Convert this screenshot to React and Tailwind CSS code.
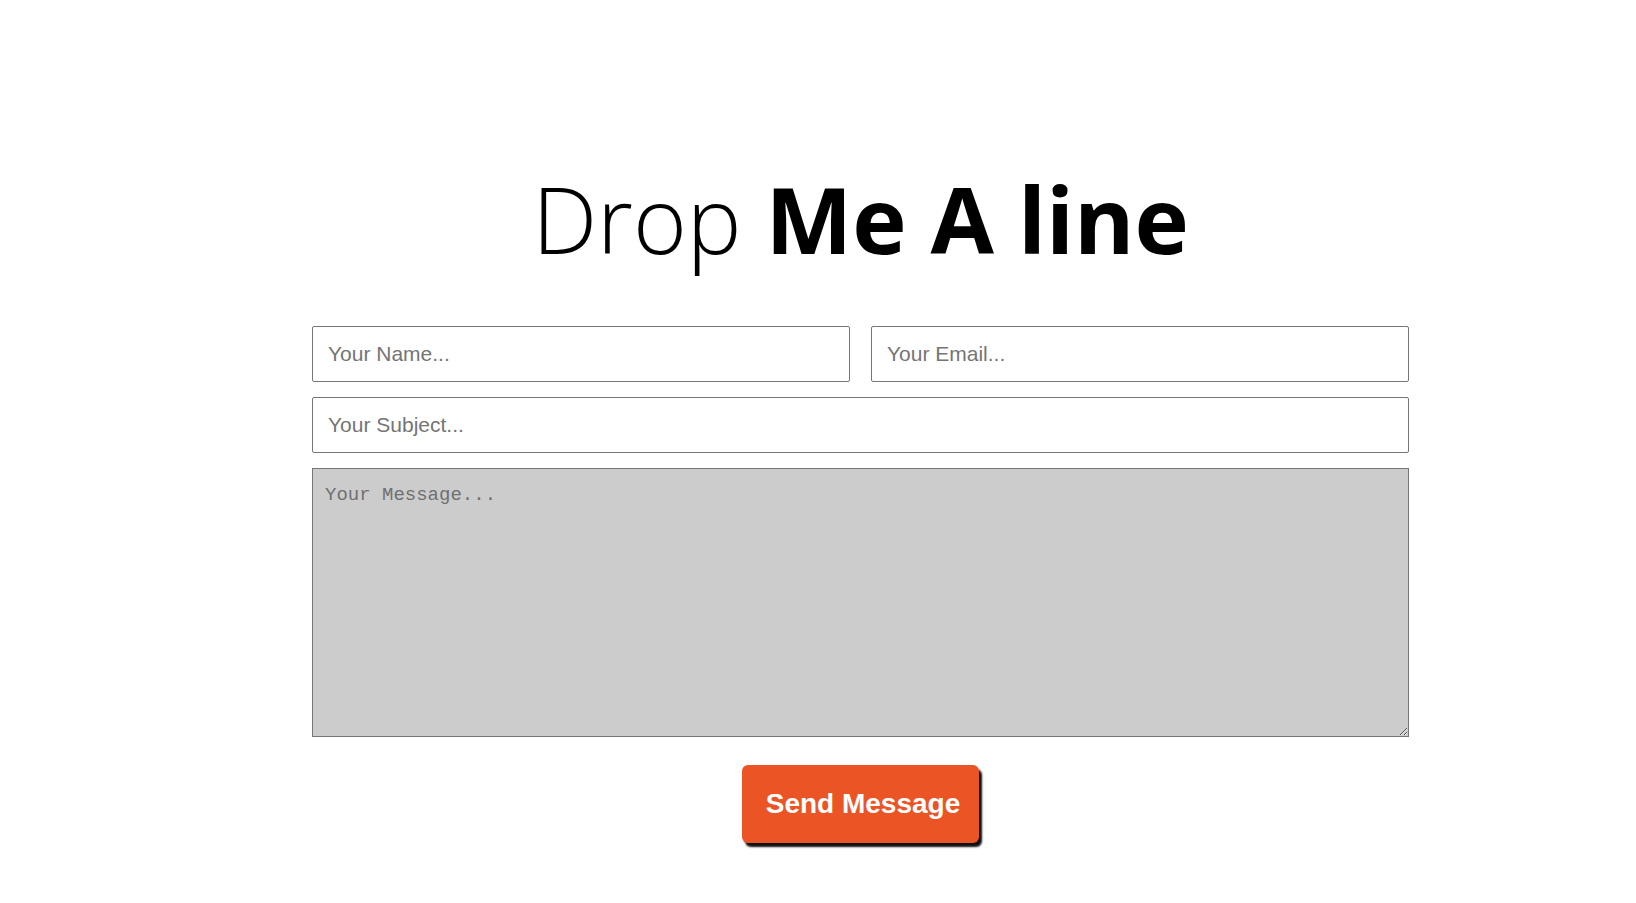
import React from "react";

export default function App() {
  return (
    <div className="min-h-screen bg-white pt-[173px]">
      <div className="ml-[312px] w-[1097px]">
        <h1 className="text-center text-[92px] leading-none text-black font-['Open_Sans',sans-serif] font-light">
          Drop <span className="font-bold">Me A line</span>
        </h1>

        <form className="mt-[61px] flex flex-col gap-[15px]">
          <div className="flex gap-[21px]">
            <input
              type="text"
              placeholder="Your Name..."
              className="h-[56px] flex-1 rounded-[2px] border border-[#767676] px-[15px] text-[21px] font-['Liberation_Sans',Arial,sans-serif] placeholder:text-[#757575] outline-none"
            />
            <input
              type="email"
              placeholder="Your Email..."
              className="h-[56px] flex-1 rounded-[2px] border border-[#767676] px-[15px] text-[21px] font-['Liberation_Sans',Arial,sans-serif] placeholder:text-[#757575] outline-none"
            />
          </div>
          <input
            type="text"
            placeholder="Your Subject..."
            className="h-[56px] w-full rounded-[2px] border border-[#767676] px-[15px] text-[21px] font-['Liberation_Sans',Arial,sans-serif] placeholder:text-[#757575] outline-none"
          />
          <textarea
            placeholder="Your Message..."
            className="h-[269px] w-full border border-[#767676] bg-[#cccccc] px-[12px] py-[12px] text-[19px] font-['Liberation_Mono',monospace] placeholder:text-[#707070] outline-none"
          />
          <div className="mt-[13px] flex justify-center">
            <button
              type="button"
              className="h-[78px] rounded-[6px] bg-[#eb5424] pl-[24px] pr-[19px] text-[28px] font-bold text-white font-['Liberation_Sans',Arial,sans-serif] shadow-[3px_4px_2px_#111]"
            >
              Send Message
            </button>
          </div>
        </form>
      </div>
    </div>
  );
}
